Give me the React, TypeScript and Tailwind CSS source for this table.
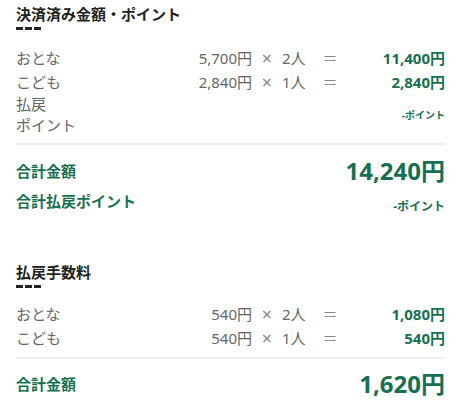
import React from "react";

const green = "text-[#17704f]";

function Dash() {
  return (
    <div className="mt-[2px] flex gap-[2px]">
      <span className="h-[3px] w-[7px] bg-[#222]" />
      <span className="h-[3px] w-[7px] bg-[#222]" />
      <span className="h-[3px] w-[7px] bg-[#222]" />
    </div>
  );
}

function Heading({ title }: { title: string }) {
  return (
    <div>
      <h2 className="text-[15px] font-bold leading-[22px] text-[#222]">{title}</h2>
      <Dash />
    </div>
  );
}

function LineRow({
  label,
  price,
  count,
  total,
}: {
  label: string;
  price: string;
  count: string;
  total: string;
}) {
  return (
    <div className="flex h-[24px] items-center text-[15px] text-[#666]">
      <span className="flex-1">{label}</span>
      <span className="w-[80px] text-right">{price}</span>
      <span className="w-[30px] text-center text-[18px] leading-none text-[#888]">×</span>
      <span className="w-[30px]">{count}</span>
      <span className="w-[36px] text-center text-[#888]">＝</span>
      <span className={`w-[97px] text-right font-bold ${green}`}>{total}</span>
    </div>
  );
}

export default function App() {
  return (
    <div
      className="h-[413px] w-[460px] overflow-hidden bg-white pl-[16px] pr-[15px] pt-[3px]"
      style={{ fontFamily: '"Noto Sans", "Noto Sans CJK JP", sans-serif' }}
    >
      <Heading title="決済済み金額・ポイント" />

      <div className="mt-[16px]">
        <LineRow label="おとな" price="5,700円" count="2人" total="11,400円" />
        <LineRow label="こども" price="2,840円" count="1人" total="2,840円" />
        <div className="flex items-center">
          <span className="w-[60px] text-[15px] leading-[21px] text-[#666]">
            払戻
            <br />
            ポイント
          </span>
          <span className={`ml-auto text-[10px] font-bold ${green}`}>-ポイント</span>
        </div>
      </div>

      <div className="mt-[7px] h-[2px] bg-[#eee]" />

      <div className="mt-[8px] flex h-[36px] items-center">
        <span className={`text-[15px] font-bold ${green}`}>合計金額</span>
        <span className={`ml-auto text-[24px] font-bold leading-[32px] ${green}`}>14,240円</span>
      </div>
      <div className="flex h-[24px] items-center">
        <span className={`text-[15px] font-bold ${green}`}>合計払戻ポイント</span>
        <span className={`ml-auto mt-[12px] text-[12px] font-bold ${green}`}>-ポイント</span>
      </div>

      <div className="mt-[48px]">
        <Heading title="払戻手数料" />
      </div>

      <div className="mt-[14px]">
        <LineRow label="おとな" price="540円" count="2人" total="1,080円" />
        <LineRow label="こども" price="540円" count="1人" total="540円" />
      </div>

      <div className="mt-[7px] h-[2px] bg-[#eee]" />

      <div className="mt-[7px] flex h-[36px] items-center">
        <span className={`text-[15px] font-bold ${green}`}>合計金額</span>
        <span className={`ml-auto text-[24px] font-bold leading-[32px] ${green}`}>1,620円</span>
      </div>
    </div>
  );
}
